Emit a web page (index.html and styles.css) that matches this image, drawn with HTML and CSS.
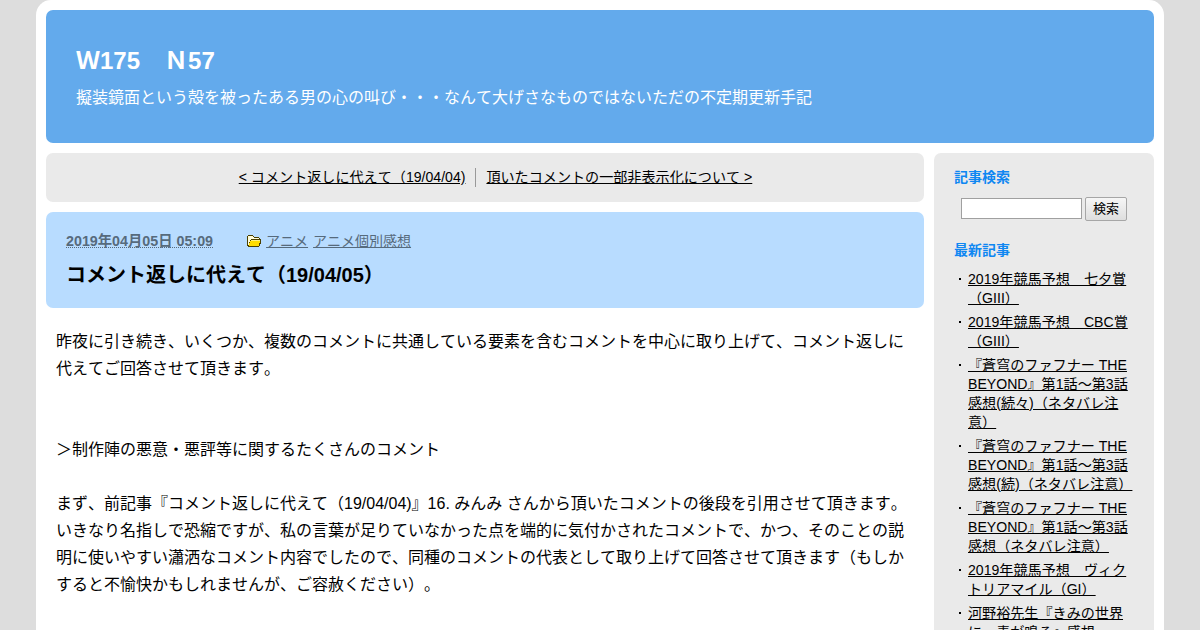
FILE: index.html
```html
<!DOCTYPE html>
<html lang="ja">
<head>
    <meta charset="utf-8">
    <title>Ｗ175　Ｎ57</title>
    <link rel="stylesheet" href="styles.css">
</head>
<body>

    <div class="container">
        <div class="header">
            <h1>Ｗ175　Ｎ57</h1>
            <p>擬装鏡面という殻を被ったある男の心の叫び・・・なんて大げさなものではないただの不定期更新手記</p>
        </div>

        <div class="content">
            <div class="main">
                <div class="pager">
                    <a class="prev" href="#">&lt; コメント返しに代えて（19/04/04)</a>
                    <a href="#">頂いたコメントの一部非表示化について &gt;</a>
                </div>

                <div class="article-header">
                    <div class="article-info">
                        <abbr class="date">2019年04月05日 05:09</abbr>
                        <svg class="folder" width="14" height="12" viewBox="0 0 14 12" shape-rendering="crispEdges">
                            <path d="M1 0h5v1h1v1h5v1h1v1h1v5h-1v2h-1v1H1v-1H0V1h1z" fill="#4a4000"/>
                            <path d="M1 1h5v1h1v1h5v1H4v1H3v2H2v3H1z" fill="#fffbd8"/>
                            <path d="M4 5h9v3h-1v3H2V8h1V6h1z" fill="#ffdc00"/>
                            <path d="M4 5h9v1H4z" fill="#fff27a"/>
                        </svg>
                        <a href="#">アニメ</a>
                        <a href="#">アニメ個別感想</a>
                    </div>
                    <h2>コメント返しに代えて（19/04/05）</h2>
                </div>

                <div class="article-body">
                    昨夜に引き続き、いくつか、複数のコメントに共通している要素を含むコメントを中心に取り上げて、コメント返しに<br>
                    代えてご回答させて頂きます。<br>
                    <br>
                    <br>
                    ＞制作陣の悪意・悪評等に関するたくさんのコメント<br>
                    <br>
                    まず、前記事『コメント返しに代えて（19/04/04)』16. みんみ さんから頂いたコメントの後段を引用させて頂きます。<br>
                    いきなり名指しで恐縮ですが、私の言葉が足りていなかった点を端的に気付かされたコメントで、かつ、そのことの説<br>
                    明に使いやすい瀟洒なコメント内容でしたので、同種のコメントの代表として取り上げて回答させて頂きます（もしか<br>
                    すると不愉快かもしれませんが、ご容赦ください）。
                </div>
            </div>

            <div class="sidebar">
                <h3>記事検索</h3>
                <form class="search" onsubmit="return false;">
                    <input type="text" name="q">
                    <button type="submit">検索</button>
                </form>

                <h3>最新記事</h3>
                <ul>
                    <li><a href="#">2019年競馬予想　七夕賞<br>（GIII）</a></li>
                    <li><a href="#">2019年競馬予想　CBC賞<br>（GIII）</a></li>
                    <li><a href="#">『蒼穹のファフナー THE<br>BEYOND』第1話～第3話<br>感想(続々)（ネタバレ注<br>意）</a></li>
                    <li><a href="#">『蒼穹のファフナー THE<br>BEYOND』第1話～第3話<br>感想(続)（ネタバレ注意）</a></li>
                    <li><a href="#">『蒼穹のファフナー THE<br>BEYOND』第1話～第3話<br>感想（ネタバレ注意）</a></li>
                    <li><a href="#">2019年競馬予想　ヴィク<br>トリアマイル（GI）</a></li>
                    <li><a href="#">河野裕先生『きみの世界<br>に、青が鳴る』感想</a></li>
                </ul>
            </div>
        </div>
    </div>

</body>
</html>
```
FILE: styles.css
```css
body {
    background-color: #ddd;
    color: #000;
    font-family: "Liberation Sans", "Noto Sans CJK JP", sans-serif;
    font-size: 14.1px;
    line-height: 19px;
    margin: 0;
    font-kerning: none;
    text-spacing-trim: space-all;
}

h1, h2, h3, p, ul {
    margin: 0;
    padding: 0;
}

a {
    color: #000;
}

.container {
    box-sizing: border-box;
    width: 1128px;
    height: 630px;
    margin: 0 auto;
    padding: 10px 10px 0;
    background-color: #fff;
    border-radius: 15px 15px 0 0;
    overflow: hidden;
}

.header {
    box-sizing: border-box;
    height: 133px;
    padding: 33px 30px;
    background-color: #63aaec;
    color: #fff;
    border-radius: 7px;
}

.header h1 {
    font-size: 24px;
    line-height: 36px;
}

.header p {
    margin-top: 7px;
    font-size: 16px;
    line-height: 24px;
}

.content {
    display: flex;
    gap: 10px;
    margin-top: 10px;
}

.main {
    width: 878px;
    white-space: nowrap;
}

.pager {
    box-sizing: border-box;
    display: flex;
    justify-content: center;
    align-items: flex-start;
    height: 49px;
    padding: 15px 0 0 21px;
    background-color: #eaeaea;
    border-radius: 7px;
}

.pager .prev {
    margin-right: 10px;
    padding-right: 10px;
    border-right: 1px solid #999;
}

.article-header {
    box-sizing: border-box;
    height: 96px;
    margin-top: 10px;
    padding: 20px;
    background-color: #b8dcff;
    border-radius: 7px;
}

.article-info {
    display: flex;
    align-items: center;
    height: 18px;
    color: #566a7c;
}

.article-info a {
    margin-right: 5px;
    color: #566a7c;
    font-size: 14px;
}

.date {
    margin-right: 34px;
    font-size: 14.3px;
    font-weight: bold;
    text-decoration: underline dotted 1px;
}

.folder {
    margin-right: 5px;
}

.article-header h2 {
    margin-top: 10px;
    font-size: 20px;
    line-height: 30px;
}

.article-body {
    padding: 20px 10px;
    font-size: 16px;
    line-height: 27px;
}

.sidebar {
    box-sizing: border-box;
    width: 220px;
    height: 520px;
    padding: 15px 20px;
    background-color: #eaeaea;
    border-radius: 7px;
    white-space: nowrap;
}

.sidebar h3 {
    color: #0f87f2;
    font-size: 14px;
    line-height: 19px;
}

.search {
    display: flex;
    align-items: flex-start;
    gap: 3px;
    margin: 10px 0 20px 7px;
}

.search input {
    box-sizing: border-box;
    width: 121px;
    height: 21px;
    margin: 1px 0 0;
    border: 1px solid #a0a0a0;
    background-color: #fff;
}

.search button {
    box-sizing: border-box;
    width: 42px;
    height: 24px;
    padding: 0;
    border: 1px solid #a6a6a6;
    border-radius: 2px;
    background: linear-gradient(#f6f6f6, #dedede);
    color: #000;
    font-family: inherit;
    font-size: 13px;
    line-height: 20px;
}

.sidebar ul {
    margin-top: 10px;
    list-style: none;
}

.sidebar li {
    position: relative;
    margin-bottom: 5px;
    padding-left: 14px;
}

.sidebar li::before {
    content: "";
    position: absolute;
    top: 8px;
    left: 5px;
    width: 2px;
    height: 2px;
    background-color: #000;
}
```
